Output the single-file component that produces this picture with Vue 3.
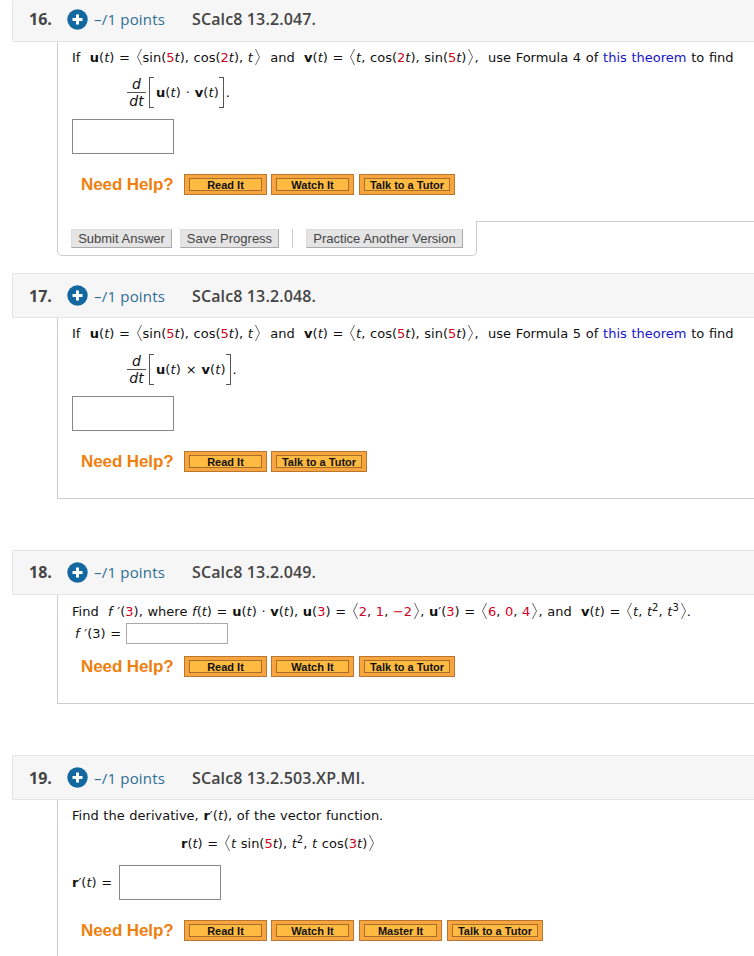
<script setup>
import { h } from 'vue'
const angle = (d) => () => h('svg', { width: 7, height: 18, viewBox: '0 0 7 18', class: 'ang' },
  [h('path', { d, fill: 'none', stroke: '#666', 'stroke-width': 1 })])
const Ang = angle('M5.5 1 L1.5 9 L5.5 17')
const AngR = angle('M1.5 1 L5.5 9 L1.5 17')
const Plus = () => h('svg', { width: 21, height: 21, viewBox: '0 0 21 21', class: 'plus' }, [
  h('circle', { cx: 10.5, cy: 10.5, r: 10.2, fill: '#12689f' }),
  h('path', { d: 'M10.5 5.5 V15.5 M5.5 10.5 H15.5', stroke: '#fff', 'stroke-width': 3 })
])
const help3 = ['Read It', 'Watch It', 'Talk to a Tutor']
const help2 = ['Read It', 'Talk to a Tutor']
const help4 = ['Read It', 'Watch It', 'Master It', 'Talk to a Tutor']
</script>

<template>
  <div class="page">
    <!-- 16 -->
    <header class="qhead q16">
      <span class="num">16.</span><Plus /><span class="pts">–/1 points</span><span class="code">SCalc8 13.2.047.</span>
    </header>
    <section class="qbody open">
      <div class="inner tight">
        <p class="line">If&nbsp; <b>u</b>(<i>t</i>) = <Ang />sin(<span class="r">5</span><i>t</i>), cos(<span class="r">2</span><i>t</i>), <i>t</i><AngR />&nbsp; and&nbsp; <b>v</b>(<i>t</i>) = <Ang /><i>t</i>, cos(<span class="r">2</span><i>t</i>), sin(<span class="r">5</span><i>t</i>)<AngR />,&nbsp; use Formula 4 of <a class="lnk">this theorem</a> to find</p>
        <div class="formula">
          <span class="frac"><i>d</i><i class="den">dt</i></span>
          <span class="brk"></span><span class="expr"><b>u</b>(<i>t</i>) · <b>v</b>(<i>t</i>)</span><span class="brk rt"></span><span class="dot">.</span>
        </div>
        <div class="ansbox big"></div>
        <div class="help mt20">
          <span class="need">Need Help?</span>
          <span v-for="b in help3" :key="b" class="hbtn" :class="{ tutor: b.startsWith('Talk') }"><span>{{ b }}</span></span>
        </div>
      </div>
      <div class="actwrap">
        <div class="actions">
          <button class="gbtn sub">Submit Answer</button>
          <button class="gbtn sav">Save Progress</button>
          <span class="sep"></span>
          <button class="gbtn pra">Practice Another Version</button>
        </div>
        <div class="tabline"></div>
      </div>
    </section>

    <!-- 17 -->
    <header class="qhead q17">
      <span class="num">17.</span><Plus /><span class="pts">–/1 points</span><span class="code">SCalc8 13.2.048.</span>
    </header>
    <section class="qbody closed h180">
      <div class="inner tight">
        <p class="line">If&nbsp; <b>u</b>(<i>t</i>) = <Ang />sin(<span class="r">5</span><i>t</i>), cos(<span class="r">5</span><i>t</i>), <i>t</i><AngR />&nbsp; and&nbsp; <b>v</b>(<i>t</i>) = <Ang /><i>t</i>, cos(<span class="r">5</span><i>t</i>), sin(<span class="r">5</span><i>t</i>)<AngR />,&nbsp; use Formula 5 of <a class="lnk">this theorem</a> to find</p>
        <div class="formula low">
          <span class="frac"><i>d</i><i class="den">dt</i></span>
          <span class="brk"></span><span class="expr"><b>u</b>(<i>t</i>) × <b>v</b>(<i>t</i>)</span><span class="brk rt"></span><span class="dot">.</span>
        </div>
        <div class="ansbox big"></div>
        <div class="help mt20">
          <span class="need">Need Help?</span>
          <span v-for="b in help2" :key="b" class="hbtn" :class="{ tutor: b.startsWith('Talk') }"><span>{{ b }}</span></span>
        </div>
      </div>
    </section>

    <!-- 18 -->
    <header class="qhead gap51 q18">
      <span class="num">18.</span><Plus /><span class="pts">–/1 points</span><span class="code">SCalc8 13.2.049.</span>
    </header>
    <section class="qbody closed h108">
      <div class="inner">
        <p class="line">Find&nbsp; <i>f</i> ′(<span class="r">3</span>), where <i>f</i>(<i>t</i>) = <b>u</b>(<i>t</i>) · <b>v</b>(<i>t</i>), <b>u</b>(<span class="r">3</span>) = <Ang /><span class="r">2</span>, <span class="r">1</span>, <span class="r">−2</span><AngR />, <b>u</b>′(<span class="r">3</span>) = <Ang /><span class="r">6</span>, <span class="r">0</span>, <span class="r">4</span><AngR />, and&nbsp; <b>v</b>(<i>t</i>) = <Ang /><i>t</i>, <i>t</i><sup>2</sup>, <i>t</i><sup>3</sup><AngR />.</p>
        <div class="fline"><span class="flbl"><i>f</i> ′(3) =</span><span class="ansbox small"></span></div>
        <div class="help mt12">
          <span class="need">Need Help?</span>
          <span v-for="b in help3" :key="b" class="hbtn" :class="{ tutor: b.startsWith('Talk') }"><span>{{ b }}</span></span>
        </div>
      </div>
    </section>

    <!-- 19 -->
    <header class="qhead gap51">
      <span class="num">19.</span><Plus /><span class="pts">–/1 points</span><span class="code">SCalc8 13.2.503.XP.MI.</span>
    </header>
    <section class="qbody last">
      <div class="inner">
        <p class="line">Find the derivative, <b>r</b>′(<i>t</i>), of the vector function.</p>
        <p class="line centered"><b>r</b>(<i>t</i>) = <Ang /><i>t</i> sin(<span class="r">5</span><i>t</i>), <i>t</i><sup>2</sup>, <i>t</i> cos(<span class="r">3</span><i>t</i>)<AngR /></p>
        <div class="rline"><span class="rlbl"><b>r</b>′(<i>t</i>) =</span><span class="ansbox big inl"></span></div>
        <div class="help mt20">
          <span class="need">Need Help?</span>
          <span v-for="b in help4" :key="b" class="hbtn" :class="{ tutor: b.startsWith('Talk') }"><span>{{ b }}</span></span>
        </div>
      </div>
    </section>
  </div>
</template>

<style>
html, body { margin: 0; background: #fff; overflow: hidden; }
</style>

<style scoped>
.page { width: 754px; height: 956px; overflow: hidden; font-family: "DejaVu Sans", Verdana, sans-serif; font-size: 13px; word-spacing: .55px; color: #111; }
.qhead { margin-left: 12px; height: 41px; background: #f6f6f6; border: 1px solid #e4e4e4; border-width: 0 0 1px 1px; border-radius: 2px 0 0 2px; display: flex; align-items: center; font-family: "Open Sans", sans-serif; box-sizing: content-box; word-spacing: 0; }
.q16 { height: 38px; padding-bottom: 3px; }
.q17 { margin-top: 17px; border-top: 1px solid #e4e4e4; height: 43px; }
.gap51 { margin-top: 51px; border-top: 1px solid #e4e4e4; height: 43px; }
.q18 { height: 42px; padding-bottom: 1px; }
.num { margin-left: 16px; width: 38px; font-size: 16px; font-weight: 700; color: #444; }
.plus { flex: none; }
.pts { margin-left: 6px; width: 98px; font-size: 15px; letter-spacing: .2px; color: #2e6d94; }
.code { font-size: 16px; font-weight: 600; letter-spacing: .13px; color: #444; }
.qbody { margin-left: 57px; border-left: 1px solid #ccc; box-sizing: border-box; }
.inner { padding: 7px 0 0 14px; }
.inner.tight { padding-top: 6px; }
.closed { border-bottom: 1px solid #ccc; }
.h180 { height: 181px; }
.h108 { height: 109px; }
.last { height: 160px; }
.open { border-left: 0; }
.open .inner { border-left: 1px solid #ccc; height: 179px; box-sizing: border-box; }
.line { margin: 0; line-height: 18px; white-space: nowrap; }
.line b { font-weight: 700; }
.r { color: #d0021b; }
.lnk { color: #1515c8; }
sup { font-size: 10px; line-height: 0; vertical-align: 5px; }
.ang { vertical-align: -4px; margin: 0 0 0 1px; }
.formula { margin: 9px 0 0 55px; height: 33px; display: flex; align-items: center; }
.formula.low { margin-top: 10px; }
.frac { width: 19px; display: flex; flex-direction: column; align-items: center; font-size: 14px; line-height: 15px; }
.den { border-top: 1px solid #555; width: 100%; text-align: center; line-height: 16px; }
.brk { width: 4px; height: 29px; border: 1px solid #555; border-right: 0; margin-left: 3px; }
.brk.rt { border: 1px solid #555; border-left: 0; margin-left: 0; }
.expr { margin-left: 2px; letter-spacing: .1px; }
.dot { margin-left: 2px; color: #000; }
.ansbox { display: block; box-sizing: border-box; border: 1px solid #888; background: #fff; }
.big { width: 102px; height: 35px; margin-top: 10px; }
.inl { margin-top: 0; }
.small { width: 102px; height: 21px; border-color: #aaa; }
.help { display: flex; align-items: center; height: 21px; padding-left: 9px; }
.mt20 { margin-top: 20px; }
.mt12 { margin-top: 12px; }
.need { width: 103px; font: 700 17px "Liberation Sans", Arial, sans-serif; letter-spacing: -.1px; word-spacing: 0; color: #ef7f0e; }
.hbtn { box-sizing: border-box; height: 21px; width: 83px; margin-right: 4px; padding: 3px 4px; background: #f9a53f; border: 1px solid #b8762e; display: flex; }
.hbtn.tutor { width: 96px; }
.hbtn + .hbtn + .hbtn { margin-left: 1px; }
.hbtn span { flex: 1; box-sizing: border-box; border: 1px solid #a86f2c; background: #ffba41; font: 700 11px/13px "Liberation Sans", Arial, sans-serif; letter-spacing: 0; word-spacing: 0; color: #111; text-align: center; white-space: nowrap; }
.actwrap { display: flex; align-items: flex-start; }
.actions { box-sizing: border-box; width: 420px; height: 35px; border: 1px solid #ccc; border-top: 0; border-radius: 0 0 5px 5px; padding-top: 8px; display: flex; align-items: flex-start; }
.tabline { flex: 1; border-top: 1px solid #ccc; }
.gbtn { box-sizing: border-box; height: 19px; padding: 0; background: #e4e4e4; border: 1px solid #ddd; border-right-color: #aaa; border-bottom-color: #aaa; font: 13px "Liberation Sans", Arial, sans-serif; letter-spacing: 0; word-spacing: 0; color: #444; }
.sub { width: 101px; margin-left: 13px; }
.sav { width: 99px; margin-left: 8px; }
.sep { width: 1px; height: 19px; background: #ccc; margin: 0 13px; }
.pra { width: 157px; }
.fline { display: flex; align-items: center; height: 21px; margin-top: 2px; }
.flbl { width: 54px; padding-left: 3px; box-sizing: border-box; }
.centered { margin: 9px 0 0 109px; }
.rline { display: flex; align-items: center; margin-top: 12px; }
.rlbl { width: 47px; }
</style>
